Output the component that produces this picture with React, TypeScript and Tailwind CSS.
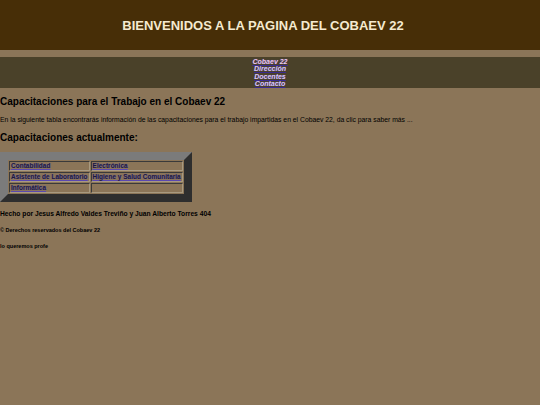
const NAV = ['Cobaev 22', 'Dirección', 'Docentes', 'Contacto']

const ROWS: string[][] = [
  ['Contabilidad', 'Electrónica'],
  ['Asistente de Laboratorio', 'Higiene y Salud Comunitaria'],
  ['Informática', ''],
]

function CellLink({ label }: { label: string }) {
  return (
    <a href="#" className="text-[#1c1838] underline decoration-[#5a48b0] [text-shadow:0_0_1px_#6a60b8]">
      {label}
    </a>
  )
}

export default function App() {
  return (
    <div
      className="min-h-[405px] w-[540px] bg-[#8b7558] text-black"
      style={{ fontFamily: '"Liberation Sans", Arial, sans-serif' }}
    >
      {/* Header */}
      <header className="h-[50px] bg-[#472e07] flex items-center justify-center pr-[14px]">
        <h1 className="text-[13px] font-bold text-[#f5ead0] leading-none">BIENVENIDOS A LA PAGINA DEL COBAEV 22</h1>
      </header>

      {/* Nav */}
      <nav className="mt-[7px] h-[31px] bg-[#4a4129] flex flex-col items-center justify-center">
        {NAV.map((label, i) => (
          <a
            key={label}
            href="#"
            className={`text-[7px] leading-[7.5px] font-bold italic underline decoration-[#3a2a90] [text-shadow:0_0_1px_#5040a0] ${
              i === 0 ? 'text-[#ecc8e4]' : 'text-[#dcc8f0]'
            }`}
          >
            {label}
          </a>
        ))}
      </nav>

      {/* Content */}
      <main className="pt-[8px]">
        <h2 className="text-[10px] font-bold leading-[12px]">Capacitaciones para el Trabajo en el Cobaev 22</h2>
        <p className="mt-[8px] text-[6.8px] leading-[8px]">
          En la siguiente tabla encontrarás información de las capacitaciones para el trabajo impartidas en el Cobaev 22, da clic para saber más ...
        </p>
        <h2 className="mt-[8px] text-[10px] font-bold leading-[12px]">Capacitaciones actualmente:</h2>

        <table className="mt-[8px] border-[8px] border-solid border-t-[#7b7b7b] border-l-[#7b7b7b] border-b-[#2e2e2e] border-r-[#2e2e2e] border-separate border-spacing-[1px] text-[6.5px] font-bold">
          <tbody>
            {ROWS.map((row, r) => (
              <tr key={r}>
                {row.map((cell, c) => (
                  <td
                    key={c}
                    className="border border-t-[#3a3a3a] border-l-[#3a3a3a] border-b-[#a89a80] border-r-[#a89a80] px-[1px] h-[10px] leading-[8px] whitespace-nowrap"
                  >
                    {cell && <CellLink label={cell} />}
                  </td>
                ))}
              </tr>
            ))}
          </tbody>
        </table>

        <footer className="font-bold">
          <p className="mt-[8px] text-[6.7px] leading-[8px]">Hecho por Jesus Alfredo Valdes Treviño y Juan Alberto Torres 404</p>
          <p className="mt-[9px] text-[5.5px] leading-[6px]">© Derechos reservados del Cobaev 22</p>
          <p className="mt-[10px] text-[5.5px] leading-[6px]">lo queremos profe</p>
        </footer>
      </main>
    </div>
  )
}
